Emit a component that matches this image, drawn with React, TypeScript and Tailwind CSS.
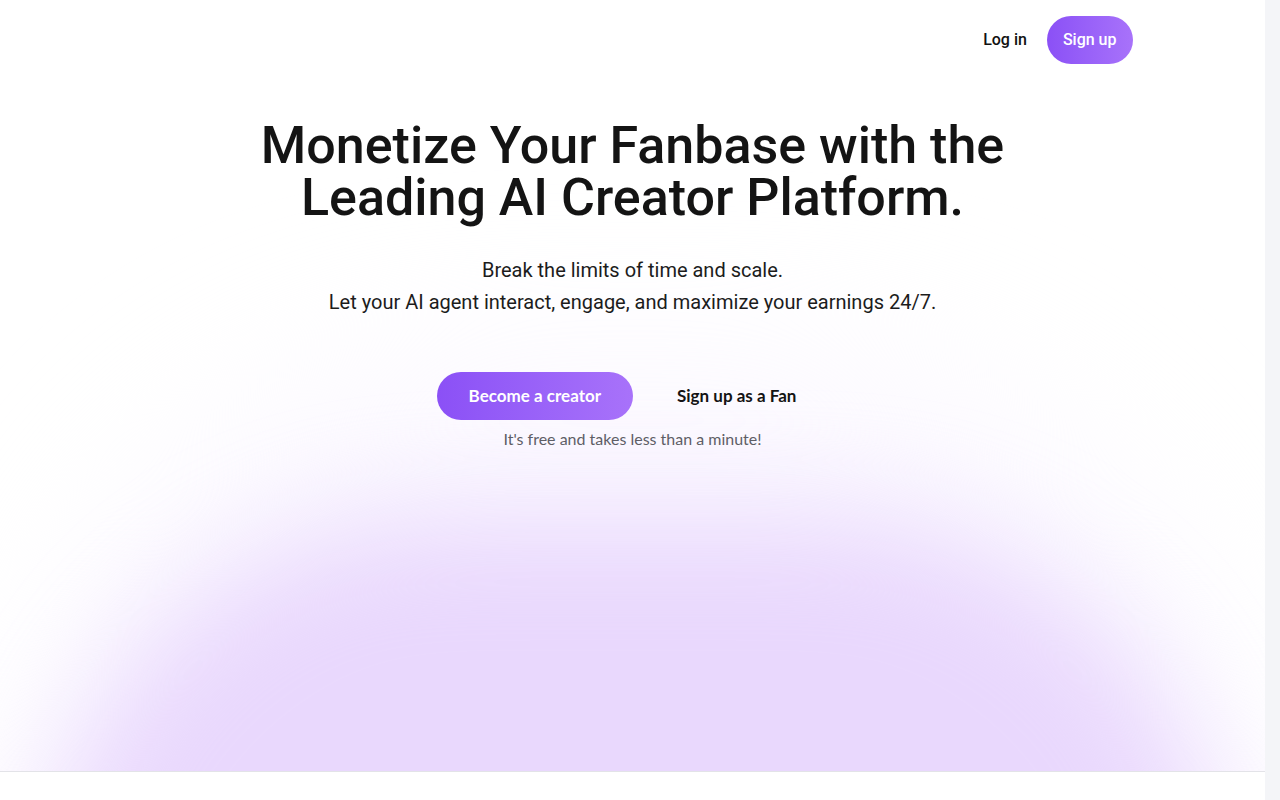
import React from "react";

export default function App() {
  return (
    <div className="flex h-[800px] w-full overflow-hidden bg-white">
      <div className="flex w-[1265px] shrink-0 flex-col">
        <section className="relative h-[772px] shrink-0 overflow-hidden border-b border-[#e3e3e8] bg-white">
          <div className="pointer-events-none absolute left-1/2 top-[360px] h-[900px] w-[1200px] -translate-x-1/2 rounded-full bg-[#fbf8ff] blur-[80px]" />
          <div className="pointer-events-none absolute left-1/2 top-[520px] h-[800px] w-[1180px] -translate-x-1/2 rounded-full bg-[#e9d8fd] blur-[55px]" />
          <div className="relative mx-auto flex w-[1000px] flex-col items-center">
            <nav className="flex w-full items-center justify-end gap-5 pt-4 font-['Roboto',sans-serif]">
              <a className="text-[16px] font-medium text-[#111]">Log in</a>
              <button className="h-12 rounded-full bg-gradient-to-r from-[#8b50f6] to-[#a872fa] px-4 text-[16px] font-medium text-white">
                Sign up
              </button>
            </nav>
            <h1 className="mt-[56px] text-center font-['Roboto',sans-serif] text-[52px] font-medium leading-[52px] text-[#141414]">
              Monetize Your Fanbase with the
              <br />
              Leading AI Creator Platform.
            </h1>
            <div className="mt-[30px] text-center font-['Roboto',sans-serif] text-[20px] leading-[32px] text-[#1c1c1c]">
              <p>Break the limits of time and scale.</p>
              <p>Let your AI agent interact, engage, and maximize your earnings 24/7.</p>
            </div>
            <div className="mt-[54px] flex items-center gap-3 font-['Lato',sans-serif]">
              <button className="h-12 rounded-full bg-gradient-to-r from-[#8b50f6] to-[#a872fa] px-8 text-[17px] font-bold text-white">
                Become a creator
              </button>
              <button className="h-12 rounded-full px-8 text-[17px] font-bold text-[#141414]">
                Sign up as a Fan
              </button>
            </div>
            <p className="mt-[7px] font-['Lato',sans-serif] text-[16px] leading-6 text-[#5e5e66]">
              It's free and takes less than a minute!
            </p>
          </div>
        </section>
        <div className="flex-1 bg-white" />
      </div>
      <div className="h-[800px] w-[15px] shrink-0 bg-[#f4f5f8]" />
    </div>
  );
}
